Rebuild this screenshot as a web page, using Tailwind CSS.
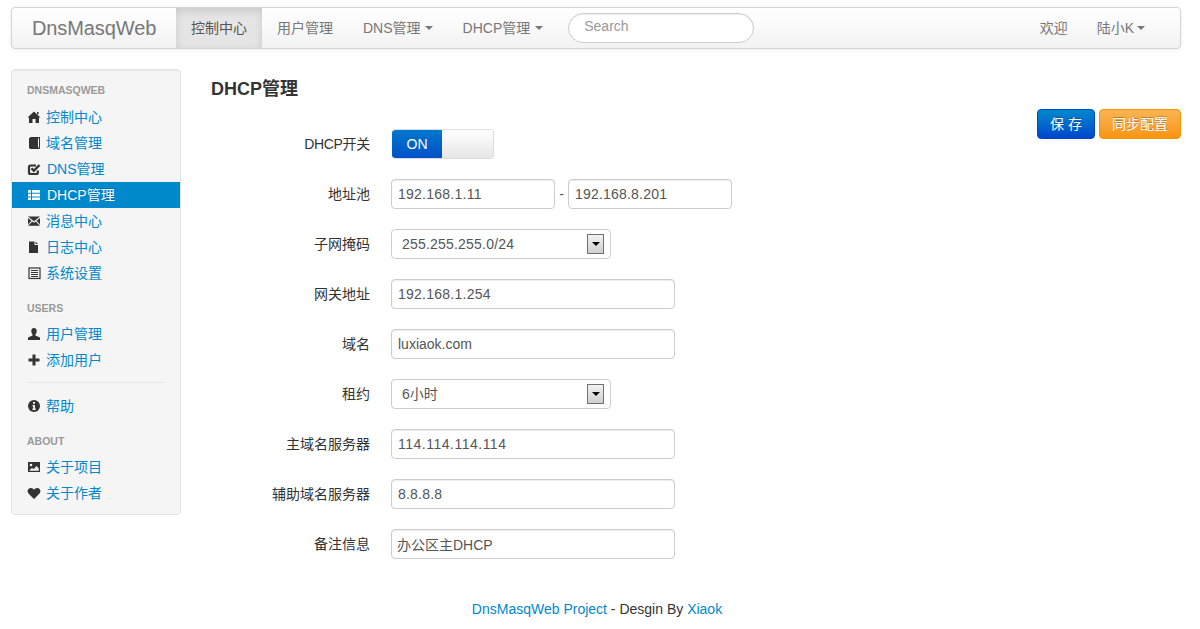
<!DOCTYPE html>
<html lang="zh-CN">
<head>
  <meta charset="UTF-8">
  <title>DnsMasqWeb</title>
  <script src="https://cdn.jsdelivr.net/npm/@tailwindcss/browser@4"></script>
</head>
<body class="bg-white text-[14px] leading-[20px] text-[#333] font-['Liberation_Sans','Noto_Sans_CJK_SC',sans-serif]">
  <div class="pt-[7px] pl-[11px] pr-[19px]">
    <!-- navbar -->
    <nav class="flex items-stretch h-[42px] border border-[#d4d4d4] rounded-[4px] bg-gradient-to-b from-white to-[#f2f2f2] shadow-[0_1px_4px_rgba(0,0,0,0.07)] text-[#777]">
      <a class="pl-[20px] w-[164px] flex items-center text-[20px] tracking-[-0.1px]">DnsMasqWeb</a>
      <a class="w-[86px] flex items-center justify-center bg-[#e5e5e5] text-[#555] shadow-[inset_0_3px_8px_rgba(0,0,0,0.125)]">控制中心</a>
      <a class="px-[15px] flex items-center">用户管理</a>
      <a class="px-[15px] flex items-center gap-[4px]">DNS管理<span class="w-0 h-0 border-x-[4px] border-x-transparent border-t-[4px] border-t-[#777]"></span></a>
      <a class="px-[15px] flex items-center gap-[5px]">DHCP管理<span class="w-0 h-0 border-x-[4px] border-x-transparent border-t-[4px] border-t-[#777]"></span></a>
      <div class="flex items-center pl-[10px] pb-[1px]">
        <input class="w-[186px] h-[30px] rounded-[15px] border border-[#ccc] bg-white px-[15px] pb-[3px] text-[14px] shadow-[inset_0_1px_1px_rgba(0,0,0,0.075)] outline-none placeholder:text-[#999]" placeholder="Search">
      </div>
      <div class="ml-auto flex items-stretch">
        <a class="px-[15px] flex items-center">欢迎</a>
        <a class="pl-[14px] pr-[35px] flex items-center gap-[3px]">陆小K<span class="w-0 h-0 border-x-[4px] border-x-transparent border-t-[4px] border-t-[#777]"></span></a>
      </div>
    </nav>

    <div class="flex gap-[30px] mt-[20px]">
      <!-- sidebar -->
      <aside class="w-[170px] h-[446px] shrink-0 bg-[#f5f5f5] border border-[#e3e3e3] rounded-[4px] shadow-[inset_0_1px_1px_rgba(0,0,0,0.05)] pt-[10px] text-[#0088cc]">
        <div class="h-[20px] mb-[4px] px-[15px] flex items-center text-[10.5px] font-bold uppercase text-[#999] [text-shadow:0_1px_0_rgba(255,255,255,0.5)]">DnsMasqWeb</div>
        <a class="h-[26px] px-[15px] flex items-center gap-[5px]">
          <svg class="w-[14px] h-[14px] shrink-0" viewBox="0 0 14 14" fill="#333"><path d="M7 1.500 13.500 7.500H12V13H8.500V9h-3v4H2V7.500H.5L7 1.500zM10 2h1.500v3L10 3.600z"/></svg>控制中心</a>
        <a class="h-[26px] px-[15px] flex items-center gap-[5px]">
          <svg class="w-[14px] h-[14px] shrink-0" viewBox="0 0 14 14" fill="#333"><path d="M2 2.500 3.500 1H13v11.500l-1 .5H3.500L2 12zM11 2.200V11.500h1V2.200z"/></svg>域名管理</a>
        <a class="h-[26px] px-[15px] flex items-center gap-[6px]">
          <svg class="w-[14px] h-[14px] shrink-0" viewBox="0 0 14 14" fill="none" stroke="#333"><path stroke-width="2.200" d="M10.800 8.500V10.500a1.500 1.500 0 0 1-1.500 1.500H3.500A1.500 1.500 0 0 1 2 10.500V5A1.500 1.500 0 0 1 3.500 3.500H9"/><path stroke-width="2.400" d="M4.500 6.300 6.800 8.800 12.500 3"/></svg>DNS管理</a>
        <a class="h-[26px] px-[15px] flex items-center gap-[6px] bg-[#0088cc] text-white [text-shadow:0_-1px_0_rgba(0,0,0,0.2)]">
          <svg class="w-[14px] h-[14px] shrink-0" viewBox="0 0 14 14" fill="#fff"><path d="M1 2h3v2.700H1zM5 2h8v2.700H5zM1 5.700h3v2.700H1zM5 5.700h8v2.700H5zM1 9.400h3v2.700H1zM5 9.400h8v2.700H5z"/></svg>DHCP管理</a>
        <a class="h-[26px] px-[15px] flex items-center gap-[5px]">
          <svg class="w-[14px] h-[14px] shrink-0" viewBox="0 0 14 14" fill="#333"><path d="M1 2.500h12L7 7.200zM1 4 4.500 6.800 1 10.500zM13 4 9.500 6.800 13 10.500zM5.300 7.400 7 8.800l1.700-1.400 4.300 4.300H1z"/></svg>消息中心</a>
        <a class="h-[26px] px-[15px] flex items-center gap-[5px]">
          <svg class="w-[14px] h-[14px] shrink-0" viewBox="0 0 14 14" fill="#333"><path d="M2 1.500h5.500v3.500H11v8H2zM8.500 1.500 11 4H8.500z"/></svg>日志中心</a>
        <a class="h-[26px] px-[15px] flex items-center gap-[5px]">
          <svg class="w-[14px] h-[14px] shrink-0" viewBox="0 0 14 14" fill="none" stroke="#333"><rect x="2" y="2" width="11" height="10.500" stroke-width="1.200"/><path d="M4 4.500h7M4 6.500h7M4 8.500h7M4 10.500h7"/></svg>系统设置</a>

        <div class="h-[20px] mt-[12px] mb-[3px] px-[15px] flex items-center text-[10.5px] font-bold uppercase text-[#999] [text-shadow:0_1px_0_rgba(255,255,255,0.5)]">Users</div>
        <a class="h-[26px] px-[15px] flex items-center gap-[5px]">
          <svg class="w-[14px] h-[14px] shrink-0" viewBox="0 0 14 14" fill="#333"><path d="M7 1c1.700 0 2.700 1.300 2.700 3S8.800 7 8.400 7.700v.8L13 10.500V13H1v-2.500l4.600-2v-.8C5.200 7 4.300 5.700 4.300 4S5.300 1 7 1z"/></svg>用户管理</a>
        <a class="h-[26px] px-[15px] flex items-center gap-[5px]">
          <svg class="w-[14px] h-[14px] shrink-0" viewBox="0 0 14 14" fill="#333"><path d="M5.500 1.500h3v4H12.500v3H8.500v4h-3v-4H1.500v-3h4z"/></svg>添加用户</a>
        <div class="h-px mt-[9px] mb-[10px] mx-[15px] bg-[#e5e5e5]"></div>
        <a class="h-[26px] px-[15px] flex items-center gap-[5px]">
          <svg class="w-[14px] h-[14px] shrink-0" viewBox="0 0 14 14"><circle cx="7" cy="7" r="6" fill="#333"/><path fill="#f5f5f5" d="M6 3h2v1.700H6zM5.500 6H8v3.500h.7V11H5.500V9.500h.7V7.300h-.7z"/></svg>帮助</a>

        <div class="h-[20px] mt-[12px] mb-[3px] px-[15px] flex items-center text-[10.5px] font-bold uppercase text-[#999] [text-shadow:0_1px_0_rgba(255,255,255,0.5)]">About</div>
        <a class="h-[26px] px-[15px] flex items-center gap-[5px]">
          <svg class="w-[14px] h-[14px] shrink-0" viewBox="0 0 14 14"><rect x="1" y="2" width="12" height="10" fill="#333"/><circle cx="4" cy="5" r="1.300" fill="#f5f5f5"/><path fill="#f5f5f5" d="M2.200 10.800 5 7.800l1.500 1.400L9.500 6l2.300 2.500v2.300z"/></svg>关于项目</a>
        <a class="h-[26px] px-[15px] flex items-center gap-[5px]">
          <svg class="w-[14px] h-[14px] shrink-0" viewBox="0 0 14 14" fill="#333"><path d="M7 13 1.500 7.500C-.5 5 1 2 3.800 2 5.200 2 6.300 2.700 7 3.800 7.700 2.700 8.800 2 10.200 2 13 2 14.500 5 12.500 7.500z"/></svg>关于作者</a>
      </aside>

      <!-- main -->
      <main class="flex-1 pt-[10px]">
        <h2 class="h-[20px] text-[18px] font-bold leading-[20px] text-[#333]">DHCP管理</h2>
        <div class="mt-[10px] flex justify-between items-start">
          <form class="pt-[20px] flex flex-col gap-[20px]">
            <div class="flex items-center gap-[21px] h-[30px]">
              <label class="w-[159px] text-right tracking-[-0.3px]">DHCP开关</label>
              <div class="ml-px w-[102px] h-[30px] flex rounded-[4px] overflow-hidden border border-[#ddd] border-l-0">
                <span class="w-[50px] flex items-center justify-center text-white bg-gradient-to-b from-[#0077cc] to-[#0050c8]">ON</span>
                <span class="flex-1 bg-gradient-to-b from-white to-[#e6e6e6]"></span>
              </div>
            </div>
            <div class="flex items-center gap-[21px] h-[30px]">
              <label class="w-[159px] text-right">地址池</label>
              <div class="flex items-center">
                <input value="192.168.1.11" class="w-[164px] h-[30px] px-[6px] border border-[#ccc] rounded-[4px] text-[#555] tracking-[0.25px] shadow-[inset_0_1px_1px_rgba(0,0,0,0.075)] outline-none">
                <span class="w-[13px] text-center text-[#555]">-</span>
                <input value="192.168.8.201" class="w-[164px] h-[30px] px-[6px] border border-[#ccc] rounded-[4px] text-[#555] tracking-[0.2px] shadow-[inset_0_1px_1px_rgba(0,0,0,0.075)] outline-none">
              </div>
            </div>
            <div class="flex items-center gap-[21px] h-[30px]">
              <label class="w-[159px] text-right">子网掩码</label>
              <div class="relative w-[220px] h-[30px]">
                <select class="w-full h-full appearance-none pl-[10px] border border-[#ccc] rounded-[4px] bg-white text-[#555] tracking-[0.2px]"><option>255.255.255.0/24</option></select>
                <span class="absolute left-[196px] top-[5px] w-[17px] h-[20px] flex items-center justify-center border border-[#707070] bg-gradient-to-b from-[#f2f2f2] to-[#cfcfcf]"><span class="w-0 h-0 border-x-[4px] border-x-transparent border-t-[4px] border-t-black"></span></span>
              </div>
            </div>
            <div class="flex items-center gap-[21px] h-[30px]">
              <label class="w-[159px] text-right">网关地址</label>
              <input value="192.168.1.254" class="w-[284px] h-[30px] px-[6px] border border-[#ccc] rounded-[4px] text-[#555] tracking-[0.25px] shadow-[inset_0_1px_1px_rgba(0,0,0,0.075)] outline-none">
            </div>
            <div class="flex items-center gap-[21px] h-[30px]">
              <label class="w-[159px] text-right">域名</label>
              <input value="luxiaok.com" class="w-[284px] h-[30px] px-[6px] border border-[#ccc] rounded-[4px] text-[#555] shadow-[inset_0_1px_1px_rgba(0,0,0,0.075)] outline-none">
            </div>
            <div class="flex items-center gap-[21px] h-[30px]">
              <label class="w-[159px] text-right">租约</label>
              <div class="relative w-[220px] h-[30px]">
                <select class="w-full h-full appearance-none pl-[10px] border border-[#ccc] rounded-[4px] bg-white text-[#555]"><option>6小时</option></select>
                <span class="absolute left-[196px] top-[5px] w-[17px] h-[20px] flex items-center justify-center border border-[#707070] bg-gradient-to-b from-[#f2f2f2] to-[#cfcfcf]"><span class="w-0 h-0 border-x-[4px] border-x-transparent border-t-[4px] border-t-black"></span></span>
              </div>
            </div>
            <div class="flex items-center gap-[21px] h-[30px]">
              <label class="w-[159px] text-right">主域名服务器</label>
              <input value="114.114.114.114" class="w-[284px] h-[30px] px-[6px] border border-[#ccc] rounded-[4px] text-[#555] tracking-[0.5px] shadow-[inset_0_1px_1px_rgba(0,0,0,0.075)] outline-none">
            </div>
            <div class="flex items-center gap-[21px] h-[30px]">
              <label class="w-[159px] text-right">辅助域名服务器</label>
              <input value="8.8.8.8" class="w-[284px] h-[30px] px-[6px] border border-[#ccc] rounded-[4px] text-[#555] tracking-[0.2px] shadow-[inset_0_1px_1px_rgba(0,0,0,0.075)] outline-none">
            </div>
            <div class="flex items-center gap-[21px] h-[30px]">
              <label class="w-[159px] text-right">备注信息</label>
              <input value="办公区主DHCP" class="w-[284px] h-[30px] px-[5px] border border-[#ccc] rounded-[4px] text-[#555] shadow-[inset_0_1px_1px_rgba(0,0,0,0.075)] outline-none">
            </div>
          </form>
          <div class="flex gap-[4px]">
            <button class="w-[58px] h-[30px] rounded-[4px] border border-[#0044cc] bg-gradient-to-b from-[#0088cc] to-[#0044cc] text-white [text-shadow:0_-1px_0_rgba(0,0,0,0.25)]">保 存</button>
            <button class="w-[82px] h-[30px] rounded-[4px] border border-[#f89406] bg-gradient-to-b from-[#fbb450] to-[#f89406] text-white [text-shadow:0_-1px_0_rgba(0,0,0,0.25)]">同步配置</button>
          </div>
        </div>
      </main>
    </div>

    <footer class="mt-[40px] ml-[2px] text-center"><a class="text-[#0088cc]">DnsMasqWeb Project</a> - Desgin By <a class="text-[#0088cc]">Xiaok</a></footer>
  </div>
</body>
</html>
